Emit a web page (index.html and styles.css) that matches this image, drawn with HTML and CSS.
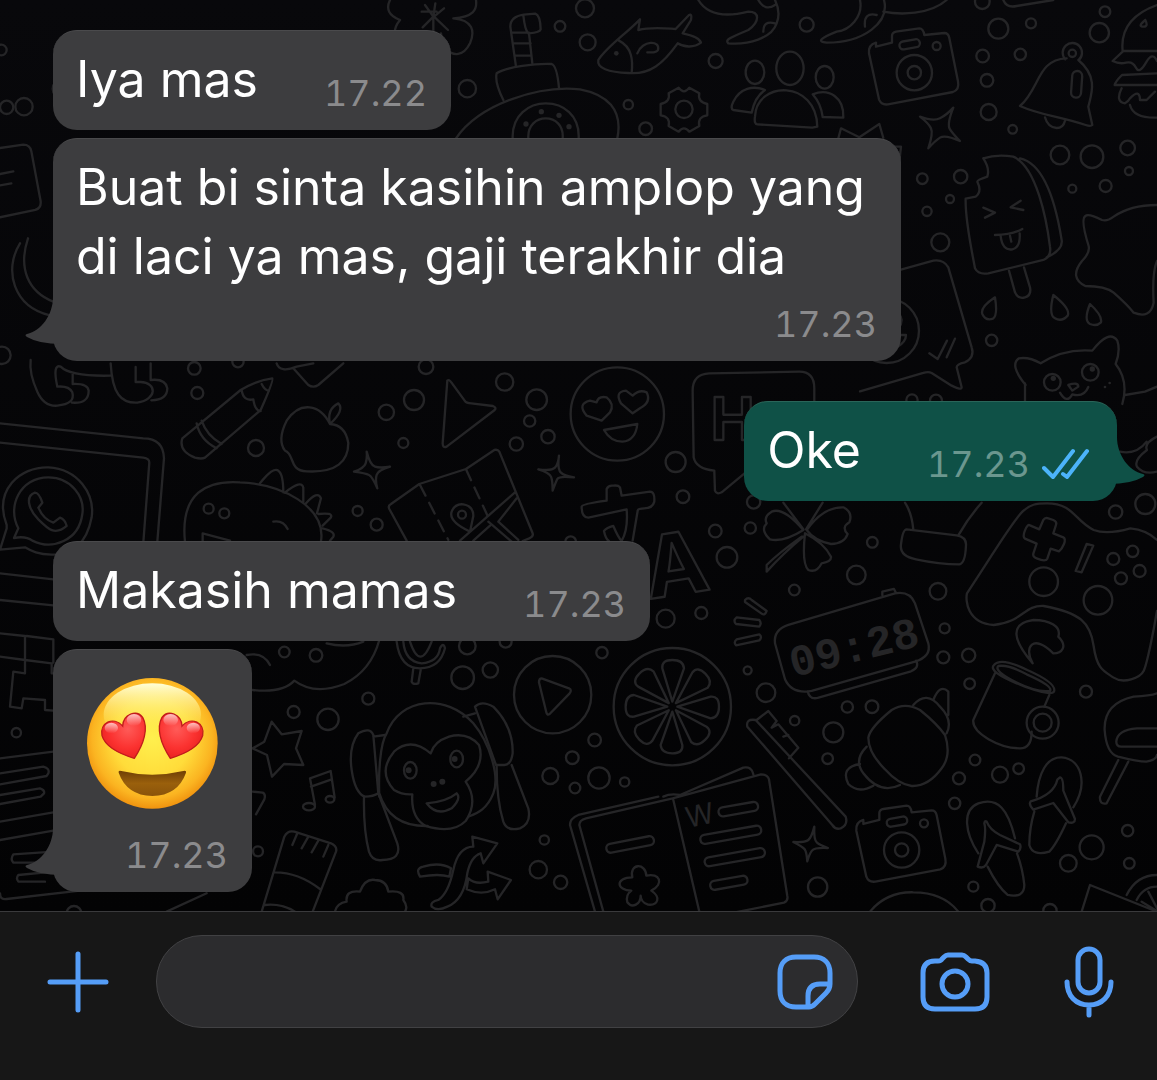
FILE: index.html
```html
<!DOCTYPE html>
<html lang="id">

<head>
    <meta charset="UTF-8">
    <meta name="viewport" content="width=device-width, initial-scale=1.0">
    <title>Chat</title>
    <link rel="stylesheet" href="styles.css">
</head>

<body>
    <main class="chat">
        <!-- doodle wallpaper, each group is drawn at 3x and scaled down -->
        <svg class="wallpaper" viewBox="0 0 1157 911" preserveAspectRatio="xMidYMid slice" aria-hidden="true">
            <defs>
                <g id="doodle-camera">
                    <path d="M228 140l48-12v-20q0-10 12-13l70-10q12 0 15 20l60-6q12 0 15 15l26 130q5 25-15 32l-195 37q-20 3-27-15l-30-138q-3-25 21-32z" />
                    <circle cx="343" cy="218" r="53" />
                    <circle cx="343" cy="218" r="20" />
                    <circle cx="410" cy="138" r="12" />
                    <rect x="298" y="121" width="62" height="24" rx="12" transform="rotate(-10 329 133)" />
                </g>
                <path id="segment" d="M337 185l-30-100q-3-25 30-25t35 25z" />
            </defs>

            <!-- note and bubbles at the top left -->
            <g transform="scale(.3333)">
                <path d="M0 444l70-10q20 0 24 20l28 150q2 20-16 26L0 652M0 522l40-8M0 556l34-6M60 730c-50 80-20 190 90 216M84 715c-30 90 0 160 76 190" />
                <circle cx="184" cy="266" r="26" /><circle cx="72" cy="320" r="26" /><circle cx="20" cy="322" r="20" /><circle cx="4" cy="150" r="16" /><circle cx="6" cy="1066" r="26" />
            </g>

            <!-- submarine, fish, gear, people -->
            <g transform="translate(440 0) scale(.3333)">
                <path d="M-10 35h-45M-18 50l30-25M-18 50l42 40M-20 50v48M-20 50l-32 32M-20 50l-25-35M-20 50l6-40M40 55c60-5 72-25 68-55M40 55c60 5 65 40 50 75-20 40-50 40-75 15M15 145q-10-30-12-45M-55 100q-45 50-75 20-15-30 10-60M-120 60q-50-20-30-60" />
                <path d="M228 200L211 80q0-30 40-36l35-3q15 5 16 47q-2 10-35 12l10 90M215 98h52M220 130h52M225 167h48M250 46q5 45 15 54" />
                <path d="M190 300c-15-30-25-60-20-80 30-20 120-30 165-28 15 5 20 50 22 72M48 415C120 310 300 255 420 268c80 15 130 60 112 147M218 415c-5-140 205-140 198 0M265 415c-5-80 110-80 103 0" />
                <g class="dots"><circle cx="304" cy="335" r="8" /><circle cx="357" cy="346" r="8" /><circle cx="258" cy="372" r="8" /><circle cx="387" cy="380" r="8" /><circle cx="529" cy="160" r="7" /></g>
                <path d="M475 180C500 140 560 100 600 58l-5 32c40-10 80-5 112-3l40-42q10-5 6 15l-25 40q50 10 55 28c-20 15-50 15-70 2C670 190 630 225 565 219c-60-2-95-15-90-39zM537 122c40 20 42 60 38 97M592 160c15-40 70-40 62-10-5 10-20 7-32 7" />
                <path d="M775 0c30 50 90 50 150 35 35 0 35 30 0 55-60 25-70 30-60 40 60 5 130-15 145-60 10-25 5-50-5-70M955 0q20 35 50 15M970 95q0-35 35-25" />
                <path d="M748 263l30 17q-6 26 24 32v34q-30 4-24 32l-30 17q-16-20-32 0l-30-17q6-28-24-32v-34q30-6 24-32l30-17q16 22 32 0z" />
                <circle cx="732" cy="328" r="26" />
                <ellipse cx="945" cy="217" rx="28" ry="35" />
                <ellipse cx="1050" cy="205" rx="41" ry="50" />
                <path d="M945 350c5-110 185-110 187 30l-15 3-165-10q-10 0-7-23zM935 338l-55-8q-10-5 0-25c20-40 60-50 95-35q-30 20-40 68z" />
                <circle cx="435" cy="25" r="27" /><circle cx="360" cy="79" r="16" /><circle cx="443" cy="127" r="24" /><circle cx="827" cy="183" r="21" /><circle cx="82" cy="266" r="26" /><circle cx="565" cy="314" r="14" /><circle cx="617" cy="386" r="19" />
            </g>

            <!-- camera, bell, burger -->
            <g transform="translate(800 0) scale(.3333)">
                <use href="#doodle-camera" />
                <ellipse cx="74" cy="232" rx="27" ry="34" />
                <path d="M38 283c50-20 95 10 92 70l-62-2q-5-40-30-68z" />
                <path d="M360 350q40 15 60 5t40-32q-20 50-10 65t30 35q-45-20-60-10t-35 32q15-45 8-60t-33-35z" />
                <path d="M660 318c60-50 50-140 140-143M835 180c60 50 40 100 30 140l12 55q-5 5-20 0C780 350 720 345 660 318M796 178a29 29 0 1 1 40 2M735 352q8 30 35 32 20 0 25-22" />
                <circle cx="817" cy="160" r="11" />
                <rect x="815" y="213" width="30" height="80" rx="15" transform="rotate(4 830 253)" />
                <path d="M1071 15c-70 25-110 70-103 138h103M968 155l-30 28q20 10 40 5t30 15 30-15 33-5M1071 220l-105 5q-20 20-22 30h127M965 265q-20 40 10 45 10-5 15-15 30-30 30 5l20 0 25-25M990 315q10 40 81 38M1036 60q-25 20-5 20 15 0 5-20" />
                <path d="M250 35c50 10 140 10 190-35M180 0c10 50-30 90-70 95-50 20-60 30-30 33 110 0 190-60 172-128M195 80q-5-45 35-35M610 0q10 25 40 18l110-18M115 415l8-30 55 27q30-20 60-40l12 42M285 440h18l-5 45" />
                <circle cx="20" cy="74" r="21" /><circle cx="595" cy="86" r="30" /><circle cx="693" cy="70" r="15" /><circle cx="548" cy="168" r="19" /><circle cx="661" cy="163" r="17" /><circle cx="561" cy="241" r="19" /><circle cx="566" cy="336" r="24" /><circle cx="638" cy="388" r="13" /><circle cx="898" cy="98" r="29" /><circle cx="915" cy="35" r="16" /><circle cx="780" cy="465" r="28" /><circle cx="876" cy="470" r="34" /><circle cx="983" cy="444" r="22" /><circle cx="987" cy="513" r="12" /><circle cx="917" cy="558" r="18" /><circle cx="817" cy="566" r="12" /><circle cx="367" cy="536" r="16" /><circle cx="482" cy="530" r="20" /><circle cx="450" cy="597" r="12" /><circle cx="547" cy="5" r="22" />
            </g>

            <!-- popsicle, cat, splash -->
            <g transform="translate(860 140) scale(.3333)">
                <path d="M370 55q20 30 12 55-30 10-30 15 15 30-5 45l-30 6C315 240 335 330 345 385q10 20 40 15l165-40q25-10 20-40C560 240 530 80 460 50q-50-8-90 5M480 55c70 15 105 120 125 245q5 30-45 52" />
                <path d="M370 203l35 15-30 15M482 182l-30 20 38 8M405 285q50 0 82-18M422 288q5 45 35 40 25-5 22-48M450 287l4 18M447 392l18 65q10 22 30 15 20-5 15-30l-18-60" />
                <path d="M405 472q-45 30-38 50 10 22 32 14 15-10 6-64zM580 465q-15 60 5 70 20 12 38-8 10-20-43-62zM690 492q-20 50 0 60 20 8 33-5 5-20-33-55z" />
                <path d="M891 195q-80 0-130 35-20 15-35 10-40-20-50-12-15 10 10 90 5 20-20 45-40 50 10 75 60 0 85 20 40 35 60 60 50 20 60-30-5-90 10-125" />
                <path d="M120 390l100-28q30-5 45 20l70 240q10 30-20 45-25 5-25 15l15 60q0 10-30-5l-60-38q-10-5-25 0l-190 55M208 640l25 17 28-55M260 652l25-56M115 520q20 20 0 45M120 585h18q0 20-25 35" />
                <circle cx="80" cy="572" r="97" />
                <path d="M497 735q-50-60-20-80 30-5 65 15 70-45 155-38 50-65 75-30 10 30-5 70 40 50 20 120M495 730v60M625 735q30-10 30 5l-18 12zM600 758q20 35 37 5 35 10 48-22M795 765l60-10 36-15" />
                <circle cx="577" cy="727" r="25" /><circle cx="691" cy="697" r="25" />
                <g class="dots"><circle cx="580" cy="715" r="8" /><circle cx="697" cy="687" r="8" /><circle cx="735" cy="741" r="4" /><circle cx="749" cy="729" r="4" /></g>
                <circle cx="201" cy="214" r="14" /><circle cx="241" cy="307" r="27" /><circle cx="395" cy="601" r="17" />
            </g>

            <!-- pencil, apple, phone frame, dinosaur -->
            <g transform="translate(0 360) scale(.3333)">
                <path d="M92 0q-5 40 20 95 20 45 60 42 55-5 45-40-10-20-45-17-15-70 10-60 30 30 150 27M218 40v32q45-2 48 20 0 40-50 36M332 10c5 90 30 120 80 118 60-10 60-60 10-62h-15v-45M452 10v50q45-5 50 25 0 35-48 36" />
                <path d="M547 235l175-145q50-30 95-35 5 5-35 95L615 293q-10 5-30 0-50-20-38-58zM725 90q5 35 35 28 5 35 22 35M785 72q10 20 22 20M590 190q10 50 60 75M605 182q15 45 60 70" />
                <path d="M990 192c-30-60-90-70-130-10-20 40-20 70-5 90 30 10 10 60 65 62 90 5 125-30 125-85-5-30-20-55-55-57zM990 192q-10-45 25-62 20 20-25 62" />
                <path d="M0 190l430 45q60 0 62 60l-20 250M0 248l430 45q18 2 18 15l-18 240" />
                <path d="M20 495C-20 390 60 320 145 322c90 5 140 80 130 150-15 80-60 115-120 112-40 0-60-10-80-22l-75 7 20-64zM55 505C20 440 60 352 145 352c70 0 110 60 102 110-10 80-90 110-150 80q-20-15-55-8zM105 398c-30 10-20 50 10 80s50 50 85 20q-5-20-20-25l-20 15q-30-10-45-45l12-15q-10-30-22-30z" />
                <path d="M555 545C540 400 620 360 720 367c120 5 260 70 243 178M780 370q40-50 55-38 15 10 15 65M855 398q50-40 55-15v45M918 430q35-40 45-15l-12 45M955 462q45-5 38 10l-25 25M968 505q40 10 32 25l-10 12M820 485q30-5 43 22M608 545v-25l82 22M830 10q10 30 60 10l50-10M880 25l45 50q15 10 30 0l75-65" />
                <circle cx="583" cy="25" r="19" /><circle cx="592" cy="99" r="18" /><circle cx="768" cy="264" r="24" /><circle cx="1073" cy="453" r="15" /><circle cx="626" cy="446" r="15" /><circle cx="673" cy="460" r="15" /><circle cx="714" cy="5" r="17" />
            </g>

            <!-- heart eyes, map, letters -->
            <g transform="translate(360 350) scale(.3333)">
                <path d="M20 305q10 40 25 45t45 0q-35 10-40 25t2 40q-15-35-25-40t-45-10q30-10 35-25t3-35zM597 317q-5 40 5 50t40 15q-45-5-50 5t-14 35q0-30-5-42t-38-22q40 5 50-5t12-36z" />
                <path d="M262 92q5-5 12 5l40 55q5 8 20 8l65 8q12 5 5 12L260 290q-12 5-12-10z" />
                <circle cx="772" cy="192" r="140" />
                <path d="M725 212l-45-15q-30-35 10-45l20 5q5-20 30-15 25 20 10 45zM818 190l-35-30q-20-35 15-38l20 15q20-20 42-10 15 30-20 48zM732 240l100-18q-5 50-45 53-35 0-55-35z" />
                <path d="M140 572l-52-95q-5-10 5-15l85-60 140-45 85-57q10-3 15 5l100 245q3 10-10 15l-20 8M300 572l165-145M340 572l50-45M385 515l70 60M415 515l60 55M415 515l55-70M330 545q-65-30-55-60 10-25 35-22 30 5 30 35z" />
                <path d="M180 405l85 165M318 358l65 140" stroke-dasharray="36 24" />
                <circle cx="306" cy="494" r="12" />
                <path d="M665 470q0-8 75-18v-35q5-12 20-10 15-2 20 5l5 25 85-12q15 0 13 30-5 20-30 20-20 0-20 8l-15 89M665 470q0 33 20 33l115-25q5 60-15 95-10-10-25-45-20 5-28 15 5 25 15 30" />
                <path d="M1160 365l-75 62q-15 8-20-5l-2-60q-55-5-62-40l-3-200q0-50 50-52l270-5q45 0 45 50v50" />
                <text x="1052" y="270" font-size="176" font-weight="700">H</text>
                <text x="0" y="0" font-size="256" font-weight="700" transform="translate(866 748) rotate(-9)">A</text>
                <circle cx="198" cy="50" r="22" /><circle cx="162" cy="150" r="30" /><circle cx="79" cy="187" r="23" /><circle cx="130" cy="279" r="15" /><circle cx="434" cy="96" r="26" /><circle cx="530" cy="149" r="31" /><circle cx="509" cy="213" r="17" /><circle cx="564" cy="260" r="20" /><circle cx="469" cy="282" r="20" /><circle cx="947" cy="336" r="30" /><circle cx="969" cy="440" r="19" /><circle cx="1181" cy="456" r="20" /><circle cx="1066" cy="543" r="19" /><circle cx="1171" cy="534" r="17" /><circle cx="1101" cy="622" r="31" /><circle cx="917" cy="806" r="27" /><circle cx="1024" cy="789" r="18" /><circle cx="50" cy="524" r="18" /><circle cx="632" cy="575" r="16" />
            </g>

            <!-- clover, gamepad, alarm clock -->
            <g transform="translate(740 390) scale(.3333)">
                <path d="M190 420q-60-70-95-55-25 15-15 35-20 20 10 48 40 10 100-28zM200 420q50-70 110-68 30 15 18 45-25 15-5 35-10 30-50 30-50-10-73-42zM195 430q-10 90 10 110 25 10 40-20 30-5 28-20-20-40-78-70zM185 440q-70 50-105 85v20q50-55 110-105zM130 338l60 80M248 338l-50 80" />
                <path d="M500 418l150 18q30 5 28 30-2 55-20 57-60 0-130-15-50-10-45-45 5-45 17-45zM495 338q20 30 25 80M725 338q-40 45-70 98" />
                <path d="M1251 450q-30-30-80-35-70 20-110 5c-60-30-60-80-140-80-80 0-75 20-240 270-5 20 0 90 80 95 90-10 90-60 150-57 110 20 140 50 150 120s30 75 60 95 80 0 90-20 30-120 40-180" />
                <path d="M910 390q5-8 15-5l15 5q12 5 8 15l-8 25 30 12q8 5 2 20t-15 22l-25-8-10 30q-5 10-30 0-15-5-12-15l10-30-35-15q-8-5 0-25t15-15l28 12zM1040 462l20 5-35 80-18-4z" />
                <path d="M878 820c-60-70-70-120 2-130 50 0 85 20 75 50 30 30 10 50-15 50-60-60-90-20-62 30z" />
                <path d="M105 760q-5-40 40-55l320-95q45-8 60 30l40 120q10 40-40 55l-310 88q-60 10-80-35zM528 812q12 20-15 32l-280 80q-25 5-30-20M427 615v-10l35-8 5 10" />
                <text class="doodle-text clock-digits" x="0" y="0" font-size="132" transform="translate(160 862) rotate(-14)">09:28</text>
                <path d="M15 630q10-10 20 0l45 33q-5 15-15 8l-50-35zM-10 682l68 8q8 10 0 20l-70-8q-10-10 2-20zM-10 748l68-15q10 8 0 18l-70 15q-8-10 2-18zM1251 140q-40 20-30 40-40 30-30 50 20 25 60 15M1140 185q50 10 80-30" />
                <circle cx="516" cy="30" r="17" /><circle cx="588" cy="32" r="18" /><circle cx="397" cy="457" r="16" /><circle cx="349" cy="555" r="28" /><circle cx="163" cy="600" r="16" /><circle cx="594" cy="604" r="25" /><circle cx="614" cy="715" r="15" /><circle cx="1127" cy="366" r="20" /><circle cx="1216" cy="342" r="30" /><circle cx="911" cy="575" r="43" /><circle cx="1074" cy="631" r="43" /><circle cx="1120" cy="507" r="18" /><circle cx="1178" cy="484" r="17" /><circle cx="1143" cy="565" r="18" /><circle cx="1199" cy="543" r="18" />
            </g>

            <!-- monkey, star, notes, arrows -->
            <g transform="translate(240 640) scale(.3333)">
                <path d="M38 150q90 10 125-28 60 45 150 10 80-40 105-132M20 45q50-10 70 30M260 10q60 15 110-5M470 5q10 80 70 80t75-60q-5-20-15 0-5 40-55 45-50-5-55-65M510 5q30 90 65 0M520 85l-5 40q5 10 20 5l8-45" />
                <path d="M95 245l30 38 60-10-17 52 22 50-58-3-36 38-15-65-43-20 35-20zM225 495l-15-80 62-22 12 80M213 440l62-22" />
                <ellipse cx="207" cy="500" rx="18" ry="11" /><ellipse cx="270" cy="478" rx="13" ry="10" />
                <path d="M418 470C415 400 420 310 440 280 480 170 620 160 700 250c50 60 80 160 60 210-20 50-50 60-75 70M418 460q30 100 145 98" />
                <path d="M572 340q-60-50-110-5-50 60 0 115 25 15 55 13-5 70 40 95 80 25 120-15 40-60 0-118 60-50 40-110-35-40-90-25-45 15-55 50zM560 490q60-5 90-30 15 15-15 45-45 25-75-15z" />
                <ellipse cx="511" cy="391" rx="19" ry="25" /><ellipse cx="650" cy="357" rx="19" ry="25" />
                <g class="dots"><circle cx="506" cy="391" r="9" /><circle cx="644" cy="357" r="9" /><circle cx="581" cy="432" r="9" /><circle cx="607" cy="425" r="9" /></g>
                <path d="M400 285q-10-25-45-5-30 40-20 110 10 70 40 80 25 0 40-10zM372 470q-2 100 15 165 10 30 40 25 60 0 45-50l-55-145M400 290l35-5M705 200q20-20 55 0 60 60 58 140-5 35-25 35l-25 0zM770 380q0 100 20 165 10 30 50 20 35-15 25-60l-50-130M670 230l35-10" />
                <path d="M905 115l82 30q10 5 2 15l-60 62q-8 5-10-5l-22-90q0-12 8-12z" />
                <path d="M65 815l68-225q10-20 30-15l110 35q20 10 15 25l-70 180M105 697q70 0 135 50M75 795q50-5 90 20M172 580l-15 35M205 590l-20 35M235 602l-20 35M265 615l-15 35M285 815q5-25 35-30-5-35 40-30 15-40 45-35 35 0 40 35 50-5 45 25 15 20 5 35M38 455l30 3q10 5 5 20l-25 45" />
                <path d="M575 800q-5-15 20-20 30-20 45-90t60-70l-3-30 75 20-42 60-8-30q-30 10-40 60-10 80-60 100-30 15-47 0zM540 710q-15-25 10-30 50-15 83 5l-5 25q-30-10-88 0zM685 715q20 20 60 10l-2-30 70 25-40 58-8-30q-40 20-85 0z" />
                <circle cx="133" cy="36" r="16" /><circle cx="228" cy="46" r="19" /><circle cx="682" cy="18" r="25" /><circle cx="751" cy="90" r="23" /><circle cx="668" cy="113" r="34" /><circle cx="385" cy="176" r="18" /><circle cx="161" cy="216" r="18" /><circle cx="264" cy="238" r="32" /><circle cx="1086" cy="38" r="17" /><circle cx="1064" cy="300" r="19" /><circle cx="997" cy="353" r="19" /><circle cx="931" cy="408" r="24" /><circle cx="1077" cy="414" r="32" /><circle cx="1005" cy="444" r="16" /><circle cx="913" cy="600" r="14" /><circle cx="895" cy="689" r="26" /><circle cx="962" cy="727" r="20" /><circle cx="54" cy="634" r="15" /><circle cx="938" cy="164" r="116" /><circle cx="797" cy="5" r="18" />
            </g>

            <!-- citrus, toothbrush, book -->
            <g transform="translate(560 640) scale(.3333)">
                <circle cx="337" cy="200" r="176" />
                <use href="#segment" />
                <use href="#segment" transform="rotate(45 337 200)" />
                <use href="#segment" transform="rotate(90 337 200)" />
                <use href="#segment" transform="rotate(135 337 200)" />
                <use href="#segment" transform="rotate(180 337 200)" />
                <use href="#segment" transform="rotate(225 337 200)" />
                <use href="#segment" transform="rotate(270 337 200)" />
                <use href="#segment" transform="rotate(315 337 200)" />
                <path d="M562 260q-5-25 25-20l270 290q8 25-15 35-15 5-25-10zM590 240l35-27 25 30-15 20 20-10 60 70-28 32M670 290l15-5" />
                <path d="M105 815l-75-260q0-20 25-30l240-55M130 815l-72-260q0-15 20-20l260-60 265-72q20 0 24 15l55 350q3 15-10 20l-160 32M340 480l78 335M310 470q20-10 50-5l190-82q25-5 30 20" />
                <text class="doodle-text" x="0" y="0" font-size="86" transform="translate(384 564) rotate(-12)">W</text>
                <rect x="475" y="494" width="120" height="27" rx="13" transform="rotate(-10 535 508)" />
                <rect x="420" y="571" width="185" height="27" rx="13" transform="rotate(-10 512 585)" />
                <rect x="433" y="638" width="183" height="27" rx="13" transform="rotate(-10 525 652)" />
                <rect x="450" y="715" width="113" height="27" rx="13" transform="rotate(-10 506 728)" />
                <rect x="138" y="600" width="145" height="27" rx="13" transform="rotate(-11 210 614)" />
                <path d="M217 712c-10-42 40-45 42-5 40-10 55 25 15 45 30 20 20 45-10 42-15-5-22-17-22-27 0 25-25 40-40 20-5-20 5-30 12-35-45 0-50-40 3-40z" />
                <path d="M763 560q-2 40 8 48t33 16q-40-2-48 8t-14 32q-2-28-8-36t-34-22q35 2 45-6t18-40z" />
                <circle cx="563" cy="91" r="12" /><circle cx="618" cy="158" r="28" /><circle cx="704" cy="242" r="14" /><circle cx="820" cy="277" r="30" /><circle cx="803" cy="356" r="16" /><circle cx="194" cy="426" r="14" /><circle cx="773" cy="741" r="29" />
            </g>

            <!-- croissant, mug, flip flops -->
            <g transform="translate(840 640) scale(.3333)">
                <use href="#doodle-camera" transform="translate(-158 412)" />
                <path d="M155 210q40-25 85 0 50 40 75 75 20 60-10 100-40 55-90 53-40-5-80-50-50-50-50-95 5-30 70-83zM220 195q40-45 80 5 40 40 20 80M280 180q20-50 45-25v70M80 320q-40 40-10 80 50 65 110 35M60 372q-60 10-35 60 30 30 75 5" />
                <path d="M462 75q20-25 100 15 90 40 80 65-10 15-100-20-100-40-80-60zM475 78q30-5 85 25 80 35 70 50-40 5-100-25-70-35-55-50zM465 100l-65 140c-5 40 80 85 140 85 30 0 35-30 35-50M628 165l-15 35" />
                <path d="M415 640c-40-60-50-130 0-150 60-20 90 20 110 105M440 545q10 25 40 40l60 28q5 12-5 22l-65-20-32 60q-8 12-25 5l20-75q5-40 0-55 2-10 7-5zM443 680q30 60 60 85 50 10 50-30-5-50-22-95M590 470c5-70 30-120 75-118 60 5 80 80 35 150M660 412q10 0 10 40l35 85q0 15-20 10l-45-58-60 20q-15-15-8-25 70-20 80-65zM583 515q-15 50-15 100 10 35 60 20 20-20 50-85" />
                <path d="M951 160q-20 8-70 10-90 20-87 100 5 70 40 80 60 15 85 15 30-5 32-20M951 265h-60q-60 5-62 40 0 15 15 15h107M835 360l-55 110q-2 25 20 20l65-125M725 815l25-80 201 80M860 765q30-60 91-60M890 780q20-40 61-40M905 785l46 28M925 755l26 50M90 815q50-60 130-58 90 0 135 58" />
                <circle cx="310" cy="52" r="18" /><circle cx="386" cy="46" r="20" /><circle cx="389" cy="131" r="16" /><circle cx="22" cy="201" r="17" /><circle cx="96" cy="200" r="19" /><circle cx="738" cy="155" r="18" /><circle cx="405" cy="360" r="16" /><circle cx="357" cy="415" r="18" /><circle cx="480" cy="404" r="24" /><circle cx="536" cy="386" r="16" /><circle cx="344" cy="490" r="17" /><circle cx="755" cy="622" r="36" /><circle cx="685" cy="670" r="25" /><circle cx="863" cy="572" r="17" /><circle cx="868" cy="670" r="16" /><circle cx="400" cy="740" r="15" /><circle cx="444" cy="797" r="20" /><circle cx="630" cy="812" r="20" /><circle cx="608" cy="248" r="48" /><circle cx="608" cy="248" r="27" />
            </g>

            <!-- invader and newspaper at the left edge -->
            <g transform="translate(0 640) scale(.3333)">
                <path d="M0-200l160 18M0-120l160 16M0-20l75 8v72M0 50l75 10M80-12l80 10v70M75 60l80 10v30h5M75 65v35l-35-5-10 105 35 5 5-30 65 5v30l25 2M0 355l160-20M0 400l130-20q20 5 15 20l-5 8-140 25M0 465l120-20q15 5 12 15l-10 10-122 22M0 545l160-28M0 600l160-28M160 635l-120 8q-10 15 0 25h100M160 695l-105 10q-8 10 0 20h80M0 760q0 20 20 17l220-25M500 815l120-55" />
                <circle cx="49" cy="278" r="14" /><circle cx="222" cy="820" r="22" />
            </g>
        </svg>

        <article class="message">
            <p class="text">Iya mas</p>
            <time class="time" datetime="17:22">17.22</time>
        </article>

        <article class="message long last">
            <p class="text">Buat bi sinta kasihin amplop yang di laci ya mas, gaji terakhir dia</p>
            <time class="time" datetime="17:23">17.23</time>
            <svg class="tail" viewBox="0 0 36 50" aria-hidden="true">
                <path d="M28 0C28 18 16 34 2 37q-3 1 0 3 12 7 34 7V0z" />
            </svg>
        </article>

        <article class="message sent last">
            <p class="text">Oke</p>
            <div class="meta">
                <time class="time" datetime="17:23">17.23</time>
                <svg class="ticks" viewBox="0 0 48 32" role="img" aria-label="Dibaca">
                    <path d="M2 20l9 9L31 3M21 26l4 3L45 3" />
                </svg>
            </div>
            <svg class="tail" viewBox="0 0 36 50" aria-hidden="true">
                <path d="M28 0C28 18 16 34 2 37q-3 1 0 3 12 7 34 7V0z" />
            </svg>
        </article>

        <article class="message">
            <p class="text">Makasih mamas</p>
            <time class="time" datetime="17:23">17.23</time>
        </article>

        <article class="message long last">
            <svg class="emoji" viewBox="261 112 393 393" role="img" aria-label="Wajah dengan mata hati">
                <defs>
                    <radialGradient id="face" cx=".5" cy=".46" r=".54">
                        <stop offset="0" stop-color="#fff04e" />
                        <stop offset=".55" stop-color="#ffdc3a" />
                        <stop offset=".85" stop-color="#fbb421" />
                        <stop offset="1" stop-color="#f0930f" />
                    </radialGradient>
                    <linearGradient id="shine" x1="0" y1="0" x2="0" y2="1">
                        <stop offset="0" stop-color="#ffffd8" />
                        <stop offset=".8" stop-color="#ffee52" stop-opacity="0" />
                    </linearGradient>
                    <radialGradient id="heart" cx=".6" cy=".35" r=".7">
                        <stop offset="0" stop-color="#ff5b58" />
                        <stop offset=".6" stop-color="#fb3230" />
                        <stop offset="1" stop-color="#e8201f" />
                    </radialGradient>
                    <linearGradient id="glint" x1="0" y1="0" x2="0" y2="1">
                        <stop offset="0" stop-color="#fff" stop-opacity=".7" />
                        <stop offset="1" stop-color="#fff" stop-opacity="0" />
                    </linearGradient>
                    <linearGradient id="mouth" x1="0" y1="0" x2="0" y2="1">
                        <stop offset="0" stop-color="#6f3f05" />
                        <stop offset=".5" stop-color="#9a600c" />
                        <stop offset="1" stop-color="#8a530a" />
                    </linearGradient>
                    <g id="heart-eye">
                        <path d="M403 353C370 343 318 325 306 285c-8-38 34-60 62-29 2-36 42-50 60-26 18 32 4 80-25 123z" fill="url(#heart)" stroke="#c01c1c" stroke-width="4" />
                        <ellipse cx="402" cy="238" rx="22" ry="18" fill="url(#glint)" />
                        <ellipse cx="334" cy="262" rx="20" ry="16" fill="url(#glint)" />
                    </g>
                </defs>
                <circle cx="457" cy="308" r="196" fill="url(#face)" />
                <ellipse cx="457" cy="222" rx="146" ry="94" fill="url(#shine)" />
                <use href="#heart-eye" />
                <use href="#heart-eye" transform="translate(914 0) scale(-1 1)" />
                <path d="M356 396q-2-8 8-5 92 22 186 0 10-3 8 5-24 68-101 70-77-2-101-70z" fill="url(#mouth)" />
            </svg>
            <time class="time" datetime="17:23">17.23</time>
            <svg class="tail" viewBox="0 0 36 50" aria-hidden="true">
                <path d="M28 0C28 18 16 34 2 37q-3 1 0 3 12 7 34 7V0z" />
            </svg>
        </article>
    </main>

    <footer class="composer">
        <button type="button" class="icon-button" aria-label="Tambah">
            <svg width="62" height="64" viewBox="0 0 62 64"><path d="M3 32h56M31 4v56" /></svg>
        </button>
        <div class="field">
            <input type="text" class="field-input" aria-label="Pesan">
            <button type="button" class="icon-button" aria-label="Stiker">
                <svg width="56" height="56" viewBox="0 0 56 56">
                    <path d="M32 53H19C9 53 3 47 3 37V19C3 9 9 3 19 3h18c10 0 16 6 16 16v11c0 4-1 6-4 9L38 50c-2 2-3 3-6 3zM31 52V42c0-8 4-12 12-12h9" />
                </svg>
            </button>
        </div>
        <div class="actions">
            <button type="button" class="icon-button" aria-label="Kamera">
                <svg width="70" height="60" viewBox="0 0 70 60">
                    <path d="M15 9h3q3 0 4-2l2-2q2-2 4-2h14q2 0 4 2l2 2q2 2 4 2h3q12 1 12 12v24q0 12-12 12H15Q3 57 3 45V21Q3 9 15 9z" />
                    <circle cx="35" cy="32" r="13" />
                </svg>
            </button>
            <button type="button" class="icon-button" aria-label="Pesan suara">
                <svg width="50" height="72" viewBox="0 0 50 72">
                    <rect x="14" y="3" width="22" height="44" rx="11" />
                    <path d="M3 36c0 14 9 23 22 23s22-9 22-23M25 60v9" />
                </svg>
            </button>
        </div>
    </footer>
</body>

</html>
```
FILE: styles.css
```css
* {
    box-sizing: border-box;
}

body {
    margin: 0;
    min-height: 100vh;
    display: flex;
    flex-direction: column;
    font-family: Inter, "Liberation Sans", sans-serif;
    background-color: #171717;
    color: #fff;
}

.chat {
    position: relative;
    flex: 1;
    display: flex;
    flex-direction: column;
    align-items: flex-start;
    justify-content: flex-end;
    gap: 8px;
    padding: 30px 40px 19px 53px;
    background: linear-gradient(#08080b, #030304);
}

/* wallpaper */
.wallpaper {
    position: absolute;
    inset: 0;
    width: 100%;
    height: 100%;
    fill: none;
    stroke: #252527;
    stroke-width: 7;
    stroke-linecap: round;
    stroke-linejoin: round;
}

.dots,
.doodle-text {
    fill: #252527;
    stroke: none;
}

.clock-digits {
    font-family: "Liberation Mono", monospace;
    font-weight: 700;
}

/* messages */
.message {
    position: relative;
    display: flex;
    align-items: flex-end;
    gap: 66px;
    max-width: 848px;
    padding: 14px 24px 16px 23px;
    border-top: 1px solid #4a4a4c;
    border-radius: 24px;
    background-color: #3d3d3f;
}

.message.long {
    flex-direction: column;
    gap: 12px;
}

.message.last:not(:last-child) {
    margin-bottom: 32px;
}

.message.sent {
    align-self: flex-end;
    padding-right: 27px;
    border-top-color: #2a6559;
    background-color: #0f5147;
}

.text {
    margin: 0;
    font-size: 50px;
    line-height: 69px;
}

.message.long .text {
    align-self: flex-start;
}

.meta {
    display: flex;
    align-items: center;
    gap: 12px;
}

.time {
    font-size: 36px;
    line-height: 42px;
    font-variant-numeric: tabular-nums;
    color: #8b8b8d;
}

.sent .time {
    color: #6b978f;
}

.ticks {
    width: 48px;
    height: 32px;
    fill: none;
    stroke: #4cb3fa;
    stroke-width: 4;
    stroke-linecap: round;
    stroke-linejoin: round;
}

.tail {
    position: absolute;
    left: -28px;
    bottom: 14px;
    width: 36px;
    height: 50px;
    fill: #3d3d3f;
}

.sent .tail {
    left: auto;
    right: -28px;
    fill: #0f5147;
    transform: scaleX(-1);
}

.emoji {
    width: 131px;
    height: 131px;
    margin: 14px 10px 13px 11px;
}

/* composer */
.composer {
    display: flex;
    align-items: center;
    gap: 47px;
    padding: 23px 43px 52px 47px;
    border-top: 1px solid #3a3a3c;
    background-color: #171717;
}

.icon-button {
    display: flex;
    padding: 0;
    border: none;
    background: none;
    cursor: pointer;
}

.icon-button svg {
    fill: none;
    stroke: #559df7;
    stroke-width: 5;
    stroke-linecap: round;
    stroke-linejoin: round;
}

.field {
    flex: 1;
    min-width: 0;
    display: flex;
    align-items: center;
    height: 93px;
    padding: 0 24px 0 40px;
    border: 1px solid #414143;
    border-radius: 46px;
    background-color: #2c2c2e;
}

.field-input {
    flex: 1;
    min-width: 0;
    border: none;
    outline: none;
    background: none;
    color: #fff;
    font: inherit;
    font-size: 50px;
}

.actions {
    display: flex;
    align-items: center;
    gap: 74px;
    margin-left: 15px;
}
```
